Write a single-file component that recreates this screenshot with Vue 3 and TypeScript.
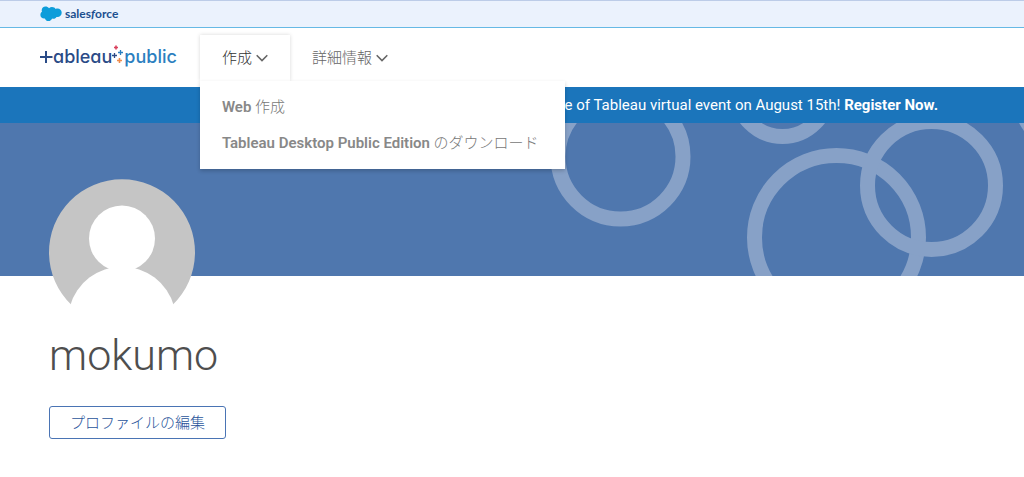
<script setup lang="ts">
interface Ring {
  cx: number
  cy: number
  r: number
}

const rings: Ring[] = [
  { cx: 620.5, cy: 33.5, r: 62.5 },
  { cx: 782.5, cy: -32.5, r: 46 },
  { cx: 836.5, cy: 114.5, r: 82 },
  { cx: 931.5, cy: 62.5, r: 64 },
  { cx: 1074, cy: -28, r: 54 },
]
</script>

<template>
  <div class="page">
    <div class="salesforce-bar">
      <a class="salesforce" href="#">
        <svg class="cloud" viewBox="0 0 22 16" aria-hidden="true">
          <path
            d="M9 2.2C9.8 1.400 10.900 1 12 1c1.600 0 2.900.7 3.600 1.900.6-.3 1.200-.4 1.900-.4 2.400 0 4.200 1.900 4.200 4.300s-1.900 4.300-4.300 4.300c-.3 0-.6 0-.9-.1-.6 1.100-1.700 1.800-3 1.800-.5 0-1-.1-1.400-.3-.6 1.500-1.900 2.600-3.600 2.600-1.700 0-3.100-1.100-3.600-2.700-.2.1-.5.1-.8.1C2.100 12.500.4 10.900.4 8.900c0-1.300.6-2.400 1.600-3.100-.2-.5-.3-1-.3-1.500C1.700 2.200 3.400.6 5.500.6 6.900.6 8.200 1.200 9 2.200z"
            fill="#0d9dda"
          />
        </svg>
        <span class="salesforce-name">sales<i>f</i>orce</span>
      </a>
    </div>

    <header class="header">
      <a class="logo" href="#">
        <svg class="cross" viewBox="0 0 13 18" aria-hidden="true">
          <path d="M0 9H12.500M6 3V15" stroke="#2a4b87" stroke-width="2" fill="none" />
        </svg>
        <span class="logo-tableau">ableau</span>
        <svg class="sparks" viewBox="0 0 12 24" aria-hidden="true">
          <path d="M0 10.500H5M2.500 8V13" stroke="#2a4b87" stroke-width="1.300" />
          <path d="M2 2.500H6M4 .5V4.500" stroke="#d9415d" stroke-width="1.600" />
          <path d="M6 7.500H11M8.500 5V10" stroke="#2c7fc0" stroke-width="1.300" />
          <path d="M5 15.500H10M7.500 13V18" stroke="#ee8a4b" stroke-width="1.600" />
        </svg>
        <span class="logo-public">public</span>
      </a>
      <nav class="nav">
        <div class="nav-item">
          <button class="nav-button open" type="button" aria-expanded="true">
            作成
            <svg class="chevron" viewBox="0 0 12 8" aria-hidden="true">
              <path d="M.7 1.200L6 6.500L11.300 1.200" />
            </svg>
          </button>
          <div class="menu">
            <a class="menu-link" href="#"><b>Web</b> 作成</a>
            <a class="menu-link" href="#"><b>Tableau Desktop Public Edition</b> のダウンロード</a>
          </div>
        </div>
        <div class="nav-item">
          <button class="nav-button" type="button" aria-expanded="false">
            詳細情報
            <svg class="chevron" viewBox="0 0 12 8" aria-hidden="true">
              <path d="M.7 1.200L6 6.500L11.300 1.200" />
            </svg>
          </button>
        </div>
      </nav>
    </header>

    <div class="announcement">
      <p>re of Tableau virtual event on August 15th! <a href="#">Register Now.</a></p>
    </div>

    <main>
      <div class="cover">
        <svg class="rings" viewBox="0 0 1024 153" preserveAspectRatio="xMaxYMin slice" aria-hidden="true">
          <circle v-for="ring in rings" :key="ring.cx" :cx="ring.cx" :cy="ring.cy" :r="ring.r" />
        </svg>
      </div>
      <section class="profile">
        <svg class="avatar" viewBox="0 0 146 146" role="img" aria-label="mokumo">
          <path d="M22.500 126A73 73 0 1 1 123.500 126z" fill="#c5c5c5" />
          <circle cx="73" cy="59.500" r="33" fill="#fff" />
          <path d="M21 127A54 54 0 0 1 125 127z" fill="#fff" />
        </svg>
        <h1>mokumo</h1>
        <button class="edit" type="button">プロファイルの編集</button>
      </section>
    </main>
  </div>
</template>

<style>
body {
  margin: 0;
  background: #fff;
}
</style>

<style scoped>
.page {
  font-family: Roboto, "Noto Sans CJK JP", sans-serif;
  font-size: 15px;
  color: #4e4e4e;
}
a {
  color: inherit;
  text-decoration: none;
}
button {
  font: inherit;
  cursor: pointer;
}
svg {
  display: block;
  flex: none;
}
.salesforce-bar {
  box-sizing: border-box;
  height: 28px;
  padding: 0 40px;
  display: flex;
  align-items: center;
  background: #ebf2fd;
  border-top: 1px solid #bccce8;
  border-bottom: 1px solid #66b9e5;
}
.salesforce {
  display: flex;
  align-items: center;
  gap: 3px;
}
.cloud {
  width: 22px;
  height: 16px;
}
.salesforce-name {
  font: 700 12px/16px Lato, sans-serif;
  color: #1c4f8f;
}
.header {
  box-sizing: border-box;
  height: 59px;
  padding: 7px 40px 0;
  display: flex;
  align-items: flex-start;
  gap: 23px;
}
.logo {
  height: 44px;
  display: flex;
  align-items: center;
  font: 500 18px/28px Inter, sans-serif;
  font-feature-settings: "cv11";
}
.cross {
  width: 13px;
  height: 18px;
}
.logo-tableau {
  color: #2a4b87;
}
.sparks {
  width: 12px;
  height: 24px;
}
.logo-public {
  color: #2c7fc0;
}
.nav {
  display: flex;
}
.nav-item {
  position: relative;
}
.nav-button {
  height: 46px;
  padding: 0 22px 4px;
  border: 0;
  background: transparent;
  display: flex;
  align-items: center;
  gap: 4px;
  color: #666;
  font-weight: 300;
}
.nav-button.open {
  color: #333;
  box-shadow: 0 0 4px rgba(0, 0, 0, 0.16);
}
.chevron {
  width: 12px;
  height: 8px;
  margin-top: 4px;
}
.chevron path {
  fill: none;
  stroke: #666;
  stroke-width: 1.6;
}
.menu {
  position: absolute;
  top: 100%;
  left: 0;
  z-index: 2;
  padding: 8px 26px 8px 22px;
  background: #fff;
  box-shadow: 0 2px 4px rgba(0, 0, 0, 0.2);
  white-space: nowrap;
}
.menu-link {
  display: block;
  line-height: 36px;
  color: #777;
  font-weight: 300;
}
.menu-link b {
  color: #888;
  font-weight: 600;
}
.announcement {
  padding: 0 86px;
  background: #1b75bb;
  color: #fff;
  text-align: right;
}
.announcement p {
  margin: 0;
  line-height: 36px;
}
.announcement a {
  font-weight: 700;
}
.cover {
  height: 153px;
  background: #4f77ae;
  overflow: hidden;
}
.rings {
  width: 100%;
  height: 100%;
}
.rings circle {
  fill: none;
  stroke: #87a1c7;
  stroke-width: 15;
}
.profile {
  padding: 0 49px 36px;
  display: flex;
  flex-direction: column;
  align-items: flex-start;
}
.avatar {
  width: 146px;
  height: 146px;
  margin-top: -97px;
}
h1 {
  margin: 4px 0 25px;
  font-size: 43px;
  line-height: 52px;
  font-weight: 300;
}
.edit {
  height: 33px;
  padding: 0 20px 2px;
  border: 1px solid #4a74b4;
  border-radius: 3px;
  background: #fff;
  color: #2a559b;
  font-weight: 300;
}
</style>
